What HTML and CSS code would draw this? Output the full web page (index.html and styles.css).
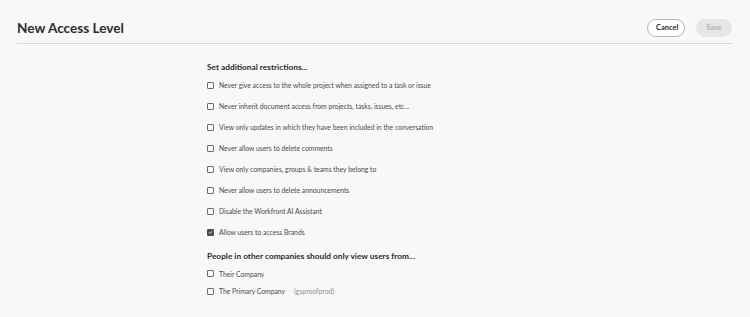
FILE: index.html
```html
<!DOCTYPE html>
<html>
<head>
<meta charset="utf-8">
<link rel="stylesheet" href="styles.css">
</head>
<body>
<div class="page">
  <header class="header">
    <h1 class="title">New Access Level</h1>
    <div class="actions">
      <button class="btn btn-cancel">Cancel</button>
      <button class="btn btn-save" disabled>Save</button>
    </div>
  </header>
  <main class="content">
    <h2 class="section-title">Set additional restrictions...</h2>
    <ul class="list">
      <li class="item"><span class="box"></span><span class="label">Never give access to the whole project when assigned to a task or issue</span></li>
      <li class="item"><span class="box"></span><span class="label">Never inherit document access from projects, tasks, issues, etc...</span></li>
      <li class="item"><span class="box"></span><span class="label">View only updates in which they have been included in the conversation</span></li>
      <li class="item"><span class="box"></span><span class="label">Never allow users to delete comments</span></li>
      <li class="item"><span class="box"></span><span class="label">View only companies, groups &amp; teams they belong to</span></li>
      <li class="item"><span class="box"></span><span class="label">Never allow users to delete announcements</span></li>
      <li class="item"><span class="box"></span><span class="label">Disable the Workfront AI Assistant</span></li>
      <li class="item"><span class="box checked"><svg viewBox="0 0 8 8" width="8" height="8"><path d="M1.8 4.2 L3.3 5.7 L6.3 2.3" fill="none" stroke="#fff" stroke-width="1.3" stroke-linecap="round" stroke-linejoin="round"/></svg></span><span class="label">Allow users to access Brands</span></li>
    </ul>
    <h2 class="section-title second">People in other companies should only view users from...</h2>
    <ul class="list compact">
      <li class="item"><span class="box"></span><span class="label">Their Company</span></li>
      <li class="item"><span class="box"></span><span class="label">The Primary Company</span><span class="muted">(gsproofprod)</span></li>
    </ul>
  </main>
</div>
</body>
</html>
```
FILE: styles.css
```css
html, body {
  margin: 0;
  padding: 0;
  background: #f8f8f8;
}
body {
  font-family: "Lato", "Noto Sans", sans-serif;
  color: #4b4b4b;
  width: 750px;
  height: 317px;
  overflow: hidden;
}
.page {
  padding: 0 18px 0 17px;
}
.header {
  display: flex;
  align-items: center;
  justify-content: space-between;
  height: 44px;
  border-bottom: 1px solid #d6d6d6;
  box-sizing: border-box;
  padding-top: 12px;
}
.title {
  margin: 0;
  font-size: 13.6px;
  font-weight: 700;
  color: #2c2c2c;
}
.actions {
  display: flex;
  gap: 11px;
}
.btn {
  font-family: inherit;
  font-size: 7.5px;
  font-weight: 700;
  height: 18px;
  border-radius: 9px;
  padding: 0 8px;
  box-sizing: border-box;
  line-height: 1;
}
.btn-cancel {
  background: #fff;
  border: 1px solid #b5b5b5;
  color: #2c2c2c;
  width: 38px;
  margin-left: 1px;
}
.btn-save {
  background: #e6e6e6;
  border: 1px solid #e6e6e6;
  color: #b3b3b3;
  width: 36px;
}
.content {
  padding-left: 190px;
  padding-top: 17px;
}
.section-title {
  margin: 0;
  font-size: 8.3px;
  font-weight: 700;
  color: #2c2c2c;
  line-height: 12px;
}
.section-title.second {
  margin-top: 7.5px;
}
.list {
  list-style: none;
  margin: 0;
  padding: 0;
  padding-top: 1.5px;
}
.compact {
  padding-top: 3px;
}
.item {
  display: flex;
  align-items: center;
  height: 21px;
  font-size: 6.8px;
}
.compact .item {
  height: 17.5px;
}
.box {
  width: 7px;
  height: 7px;
  border: 1px solid #6e6e6e;
  border-radius: 1px;
  box-sizing: border-box;
  margin-right: 5px;
  display: flex;
  align-items: center;
  justify-content: center;
  flex: none;
}
.box.checked {
  background: #4b4b4b;
  border-color: #4b4b4b;
}
.box svg {
  width: 7px;
  height: 7px;
}
.muted {
  color: #8e8e8e;
  margin-left: 9px;
}
```
